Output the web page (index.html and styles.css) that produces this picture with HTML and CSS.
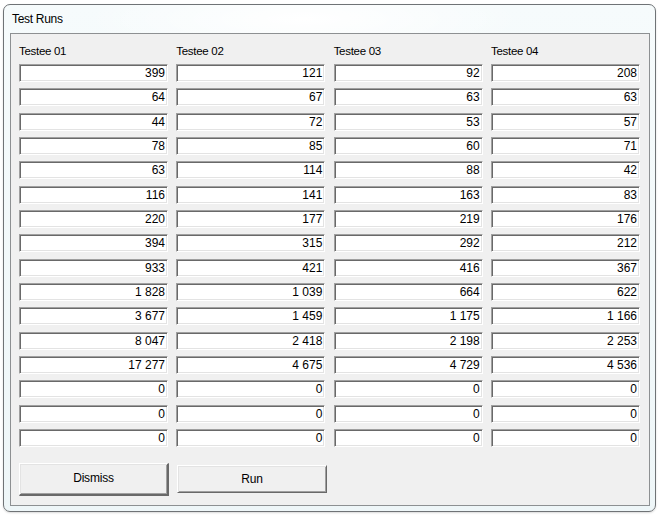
FILE: index.html
```html
<!DOCTYPE html>
<html>
<head>
<meta charset="utf-8">
<link rel="stylesheet" href="styles.css">
</head>
<body>
<div class="window">
  <div class="titlebar">Test Runs</div>
  <div class="panel">
    <div class="grid">
      <div class="col">
        <div class="label">Testee 01</div>
        <div class="box">399</div><div class="box">64</div><div class="box">44</div><div class="box">78</div>
        <div class="box">63</div><div class="box">116</div><div class="box">220</div><div class="box">394</div>
        <div class="box">933</div><div class="box">1 828</div><div class="box">3 677</div><div class="box">8 047</div>
        <div class="box">17 277</div><div class="box">0</div><div class="box">0</div><div class="box">0</div>
      </div>
      <div class="col">
        <div class="label">Testee 02</div>
        <div class="box">121</div><div class="box">67</div><div class="box">72</div><div class="box">85</div>
        <div class="box">114</div><div class="box">141</div><div class="box">177</div><div class="box">315</div>
        <div class="box">421</div><div class="box">1 039</div><div class="box">1 459</div><div class="box">2 418</div>
        <div class="box">4 675</div><div class="box">0</div><div class="box">0</div><div class="box">0</div>
      </div>
      <div class="col">
        <div class="label">Testee 03</div>
        <div class="box">92</div><div class="box">63</div><div class="box">53</div><div class="box">60</div>
        <div class="box">88</div><div class="box">163</div><div class="box">219</div><div class="box">292</div>
        <div class="box">416</div><div class="box">664</div><div class="box">1 175</div><div class="box">2 198</div>
        <div class="box">4 729</div><div class="box">0</div><div class="box">0</div><div class="box">0</div>
      </div>
      <div class="col">
        <div class="label">Testee 04</div>
        <div class="box">208</div><div class="box">63</div><div class="box">57</div><div class="box">71</div>
        <div class="box">42</div><div class="box">83</div><div class="box">176</div><div class="box">212</div>
        <div class="box">367</div><div class="box">622</div><div class="box">1 166</div><div class="box">2 253</div>
        <div class="box">4 536</div><div class="box">0</div><div class="box">0</div><div class="box">0</div>
      </div>
    </div>
    <div class="buttons">
      <div class="btn btn-default">Dismiss</div>
      <div class="btn">Run</div>
    </div>
  </div>
</div>
</body>
</html>
```
FILE: styles.css
```css
html, body {
  margin: 0;
  padding: 0;
  background: #ffffff;
  width: 660px;
  height: 516px;
  overflow: hidden;
  font-family: "Liberation Sans", Arial, sans-serif;
  color: #000;
}

.window {
  box-sizing: border-box;
  margin: 4px 0 0 3px;
  width: 653px;
  height: 508px;
  border: 1px solid #6f7376;
  border-radius: 7px;
  padding: 0 5px 5px 6px;
  background: radial-gradient(ellipse 220px 40px at 300px 14px, #ffffff 0%, rgba(255,255,255,0) 100%),
              linear-gradient(#f6fbfc, #eef6f8);
  box-shadow: 0 1px 2px rgba(0,0,0,0.15);
  display: flex;
  flex-direction: column;
}

.titlebar {
  height: 28px;
  line-height: 28px;
  padding-left: 2px;
  font-size: 12px;
  letter-spacing: -0.3px;
  flex: none;
}

.panel {
  box-sizing: border-box;
  width: 640px;
  height: 474px;
  border: 1px solid #8d9092;
  background: #f0f0f0;
  padding: 0 9px 0 8px;
  display: flex;
  flex-direction: column;
}

.grid {
  display: grid;
  grid-template-columns: repeat(4, 149px);
  column-gap: 8.33px;
}

.col {
  display: flex;
  flex-direction: column;
  row-gap: 6.33px;
}

.label {
  font-size: 11.5px;
  line-height: 13px;
  margin-top: 11px;
  margin-bottom: -0.33px;
  letter-spacing: -0.3px;
}

.box {
  box-sizing: border-box;
  height: 18px;
  background: #ffffff;
  border-style: solid;
  border-width: 1px;
  border-color: #a0a0a0 #ffffff #ffffff #a0a0a0;
  box-shadow: inset 1px 1px 0 #696969, inset -1px -1px 0 #e3e3e3;
  font-size: 12px;
  line-height: 16px;
  text-align: right;
  padding-right: 2px;
  white-space: pre;
}

.buttons {
  display: flex;
  align-items: center;
  column-gap: 8px;
  margin-top: 16px;
}

.btn {
  box-sizing: border-box;
  width: 150px;
  height: 28px;
  background: #f0f0f0;
  border-style: solid;
  border-width: 1px;
  border-color: #ffffff #696969 #696969 #ffffff;
  box-shadow: inset 1px 1px 0 #e3e3e3, inset -1px -1px 0 #a0a0a0;
  font-size: 12px;
  display: flex;
  align-items: center;
  justify-content: center;
  letter-spacing: -0.2px;
}

.btn-default {
  height: 33px;
  padding-bottom: 2px;
  border-width: 1px 2px 2px 1px;
}
```
